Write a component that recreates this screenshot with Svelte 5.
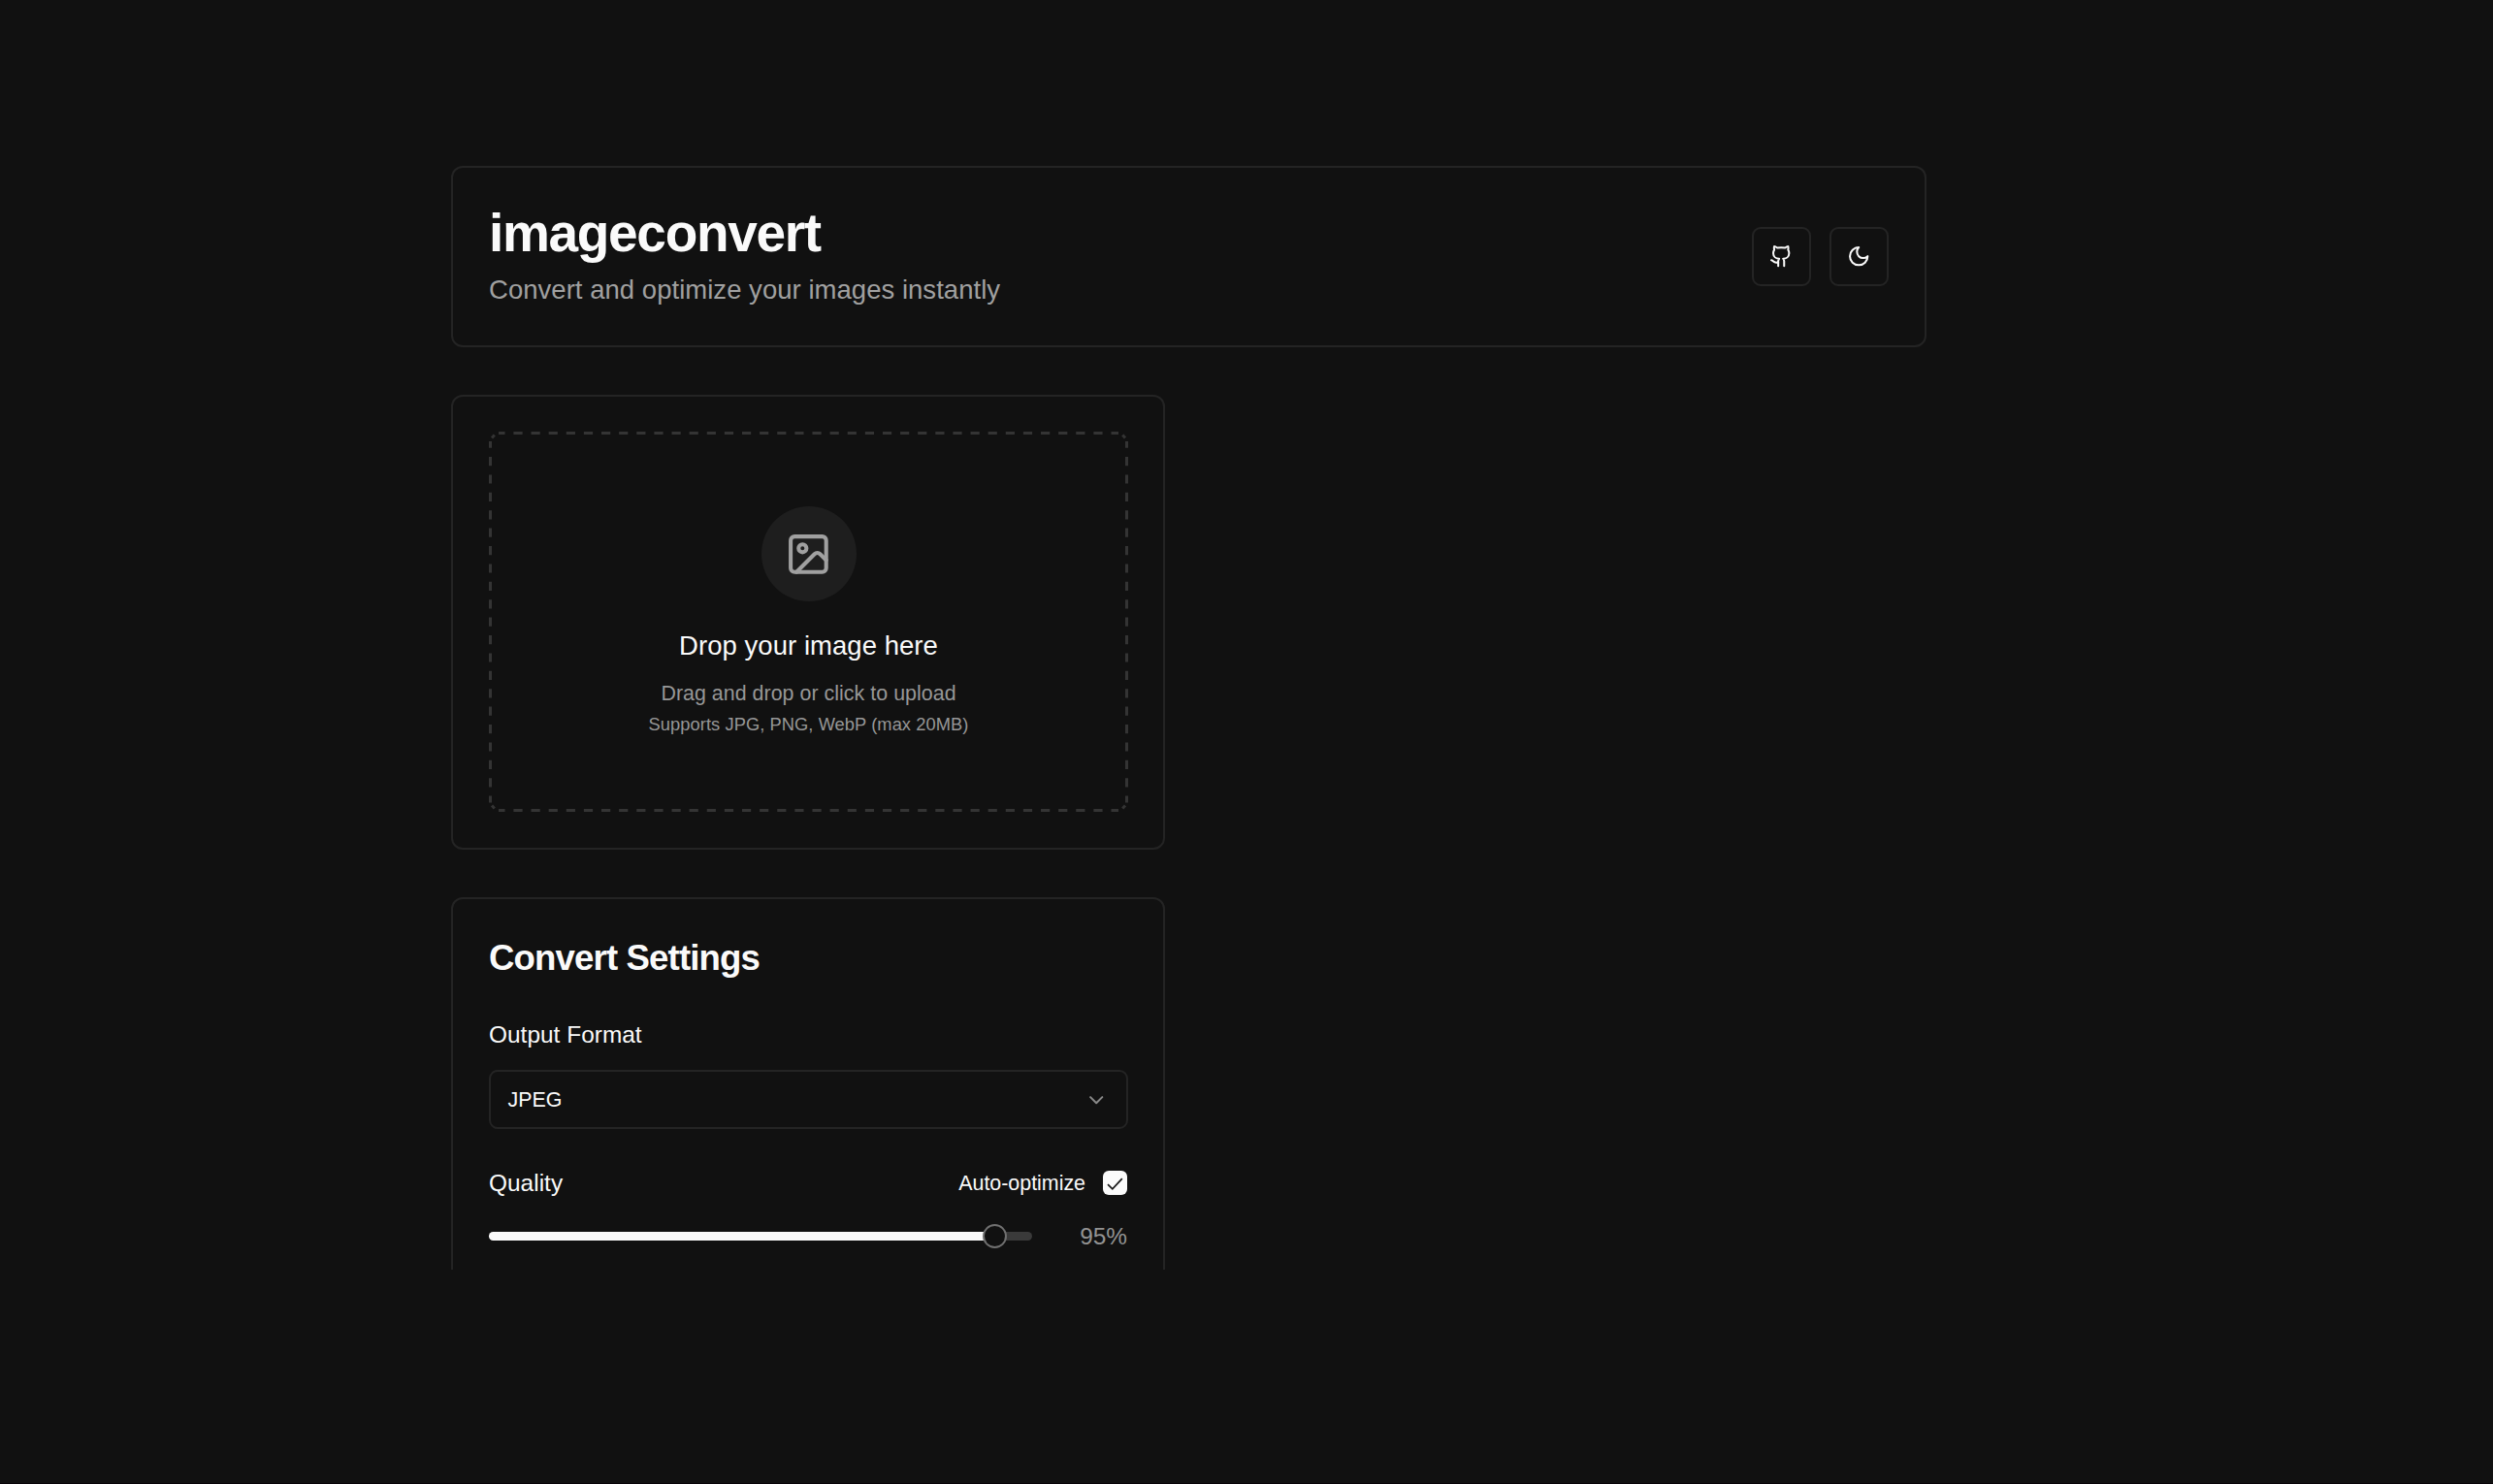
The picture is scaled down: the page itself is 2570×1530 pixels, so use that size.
<script>
  let quality = $state(95);
  let format = $state('JPEG');
  let optimize = $state(true);
</script>

{#snippet icon(name)}
  <svg class="icon {name}" viewBox="0 0 24 24" aria-hidden="true">
    {#if name === 'github'}
      <path d="M15 22v-4a4.8 4.8 0 0 0-1-3.5c3 0 6-2 6-5.5.08-1.25-.27-2.48-1-3.5.28-1.15.28-2.35 0-3.5 0 0-1 0-3 1.5-2.64-.5-5.36-.5-8 0C6 2 5 2 5 2c-.3 1.15-.3 2.35 0 3.5A5.403 5.403 0 0 0 4 9c0 3.5 3 5.5 6 5.5-.39.49-.68 1.05-.85 1.65-.17.6-.22 1.23-.15 1.85v4" />
      <path d="M9 18c-4.51 2-5-2-7-2" />
    {:else if name === 'moon'}
      <path d="M12 3a6 6 0 0 0 9 9 9 9 0 1 1-9-9Z" />
    {:else if name === 'image'}
      <rect width="18" height="18" x="3" y="3" rx="2" ry="2" />
      <circle cx="9" cy="9" r="2" />
      <path d="m21 15-3.086-3.086a2 2 0 0 0-2.828 0L6 21" />
    {:else if name === 'chevron'}
      <path d="m6 9 6 6 6-6" />
    {/if}
  </svg>
{/snippet}

<main>
  <header class="card">
    <div>
      <h1>imageconvert</h1>
      <p class="tagline">Convert and optimize your images instantly</p>
    </div>
    <div class="actions">
      <button class="square" aria-label="GitHub">{@render icon('github')}</button>
      <button class="square" aria-label="Toggle theme">{@render icon('moon')}</button>
    </div>
  </header>

  <section class="card upload">
    <div class="dropzone">
      <svg class="dashes" viewBox="0 0 659 392" aria-hidden="true">
        <path class="across" d="M10 1.5H649M10 390.5H649" />
        <path class="down" d="M1.5 10V382.5M657.5 10V382.5" />
        <path d="M3 6.4 5.8 3.4M653.2 3.4 656 6.4M3 385.6 5.8 388.6M653.2 388.6 656 385.6" />
      </svg>
      <div class="badge">{@render icon('image')}</div>
      <p class="drop-title">Drop your image here</p>
      <p class="drop-hint">Drag and drop or click to upload</p>
      <p class="drop-types">Supports JPG, PNG, WebP (max 20MB)</p>
    </div>
  </section>

  <section class="card settings">
    <h2>Convert Settings</h2>
    <div class="label">Output Format</div>
    <button class="select"><span>{format}</span>{@render icon('chevron')}</button>
    <div class="row quality">
      <span class="label">Quality</span>
      <button class="toggle" onclick={() => (optimize = !optimize)}>
        <span class="toggle-text">Auto-optimize</span>
        <span class="check">
          {#if optimize}
            <svg viewBox="0 0 25 25" aria-hidden="true"><path d="m5 14.2 4.8 4.6L19.8 8.2" /></svg>
          {/if}
        </span>
      </button>
    </div>
    <div class="row slider-row">
      <div class="track">
        <div class="fill" style:width="{quality}%"></div>
        <div class="thumb"></div>
      </div>
      <span class="percent">{quality}%</span>
    </div>
  </section>
</main>
<div class="edge"></div>

<style>
  :global(body) {
    background: #111111;
  }
  main {
    box-sizing: border-box;
    height: 1309px;
    width: 1986px;
    padding: 171px 0 0 465px;
    overflow: hidden;
    font-family: 'Liberation Sans', Arial, sans-serif;
    color: #fafafa;
  }
  .edge {
    height: 1px;
    margin-top: 220px;
    background: #080308;
  }
  h1, h2, p {
    margin: 0;
  }
  button {
    font: inherit;
    color: inherit;
    background: none;
    border: 0;
    padding: 0;
  }
  .card {
    box-sizing: border-box;
    border: 2px solid #242424;
    border-radius: 12px;
    background: #111111;
  }
  header {
    display: flex;
    align-items: center;
    justify-content: space-between;
    height: 187px;
    padding: 0 37px;
  }
  h1 {
    font-size: 55px;
    line-height: 61px;
    letter-spacing: -1.32px;
  }
  .tagline {
    margin-top: 6px;
    font-size: 27.5px;
    line-height: 43px;
    letter-spacing: 0.03px;
    color: #a0a0a0;
  }
  .actions {
    display: flex;
    gap: 19px;
  }
  .square {
    box-sizing: border-box;
    display: grid;
    place-items: center;
    width: 61px;
    height: 61px;
    border: 2px solid #242424;
    border-radius: 9px;
  }
  .icon {
    display: block;
    width: 24.4px;
    height: 24.4px;
    fill: none;
    stroke: currentColor;
    stroke-width: 2;
    stroke-linecap: round;
    stroke-linejoin: round;
  }
  .upload {
    width: 736px;
    height: 469px;
    margin-top: 49px;
    padding: 36px 37px;
  }
  .dropzone {
    position: relative;
    box-sizing: border-box;
    height: 392px;
    width: 659px;
    padding-top: 77px;
    text-align: center;
  }
  .dashes {
    position: absolute;
    inset: 0;
    width: 659px;
    height: 392px;
    fill: none;
    stroke: #343434;
    stroke-width: 3;
  }
  .across {
    stroke-dasharray: 9.2 8.92;
    stroke-dashoffset: 2.7;
  }
  .down {
    stroke-dasharray: 9.2 9.2;
    stroke-dashoffset: 2.4;
  }
  .badge {
    display: grid;
    place-items: center;
    width: 98px;
    height: 98px;
    margin: 0 auto;
    border-radius: 50%;
    background: #1e1e1e;
    color: #a0a0a0;
  }
  .icon.image {
    width: 48.8px;
    height: 48.8px;
  }
  .drop-title {
    margin-top: 24px;
    font-size: 27.5px;
    line-height: 43px;
    letter-spacing: 0.04px;
  }
  .drop-hint {
    margin-top: 13px;
    font-size: 21.4px;
    line-height: 31px;
    letter-spacing: 0.03px;
    color: #979797;
  }
  .drop-types {
    margin-top: 3px;
    font-size: 18.3px;
    line-height: 25px;
    letter-spacing: 0.07px;
    color: #979797;
  }
  .settings {
    width: 736px;
    height: 560px;
    margin-top: 49px;
    padding: 36px 37px;
  }
  h2 {
    font-size: 36.6px;
    line-height: 49px;
    letter-spacing: -0.85px;
  }
  .label {
    font-size: 24.4px;
    line-height: 37px;
    letter-spacing: 0.03px;
  }
  h2 + .label {
    margin-top: 36px;
  }
  .select {
    box-sizing: border-box;
    display: flex;
    align-items: center;
    justify-content: space-between;
    width: 659px;
    height: 61px;
    margin-top: 18px;
    padding: 1px 19px 0 17.6px;
    border: 2px solid #242424;
    border-radius: 9px;
    font-size: 21.4px;
  }
  .chevron {
    color: #888888;
  }
  .row {
    display: flex;
    align-items: center;
    justify-content: space-between;
  }
  .quality {
    margin-top: 37px;
  }
  .toggle {
    display: flex;
    align-items: center;
    gap: 18px;
    font-size: 21.4px;
  }
  .toggle-text {
    padding-top: 1px;
  }
  .check {
    width: 25px;
    height: 25px;
    border-radius: 6px;
    background: #fafafa;
  }
  .check svg {
    display: block;
    fill: none;
    stroke: #161616;
    stroke-width: 1.7;
  }
  .slider-row {
    margin-top: 18px;
  }
  .track {
    position: relative;
    width: 560px;
    height: 9px;
    border-radius: 5px;
    background: #3a3a3a;
  }
  .fill {
    height: 100%;
    border-radius: 5px;
    background: #fafafa;
  }
  .thumb {
    position: absolute;
    box-sizing: border-box;
    left: 509px;
    top: -8px;
    width: 25px;
    height: 25px;
    border: 2px solid #707070;
    border-radius: 50%;
    background: #111111;
  }
  .percent {
    font-size: 24.4px;
    line-height: 37px;
    color: #939393;
  }
</style>
